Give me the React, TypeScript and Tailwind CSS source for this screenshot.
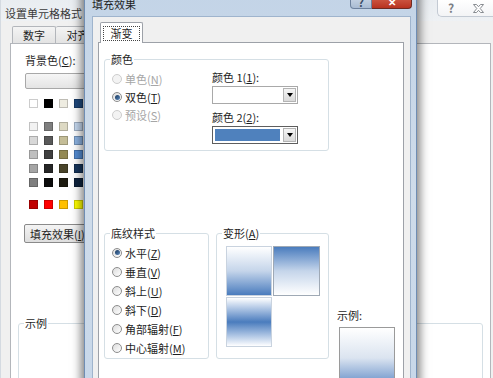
import type { ReactNode } from 'react';

const themeTop = ['#ffffff', '#000000', '#eeece1', '#1f497d'];

const themeShades = [
  ['#f2f2f2', '#7f7f7f', '#ddd9c3', '#c6d9f0'],
  ['#d8d8d8', '#595959', '#c4bd97', '#8db3e2'],
  ['#bfbfbf', '#3f3f3f', '#938953', '#548dd4'],
  ['#a5a5a5', '#262626', '#494429', '#17365d'],
  ['#7f7f7f', '#0c0c0c', '#1d1b10', '#0f243e'],
];

const standard = ['#c00000', '#ff0000', '#ffc000', '#ffff00'];

const shadingStyles = [
  { label: '水平', key: 'Z', checked: true },
  { label: '垂直', key: 'V' },
  { label: '斜上', key: 'U' },
  { label: '斜下', key: 'D' },
  { label: '角部辐射', key: 'F' },
  { label: '中心辐射', key: 'M' },
];

function Swatch({ color }: { color: string }) {
  return (
    <span
      className="h-[9px] w-[9px] border border-black/20"
      style={{ backgroundColor: color }}
    />
  );
}

function Radio({ checked, disabled }: { checked?: boolean; disabled?: boolean }) {
  return (
    <span
      className={`flex h-[10px] w-[10px] shrink-0 items-center justify-center rounded-full border ${
        disabled
          ? 'border-[#cdcdcd] bg-[#f3f3f3]'
          : 'border-[#8d8d8d] bg-linear-to-br from-[#dcdcdc] to-white'
      }`}
    >
      {checked && (
        <span className="h-[5px] w-[5px] rounded-full bg-linear-to-br from-[#17365a] to-[#5d8bc0]" />
      )}
    </span>
  );
}

function RadioRow({
  label,
  accel,
  checked,
  disabled,
  height,
}: {
  label: string;
  accel: string;
  checked?: boolean;
  disabled?: boolean;
  height: string;
}) {
  return (
    <div className={`flex items-center ${height}`}>
      <Radio checked={checked} disabled={disabled} />
      <span className={`ml-[3px] ${disabled ? 'text-[#a6a6a6]' : 'text-[#1e1e1e]'}`}>
        {label}(<span className="underline">{accel}</span>)
      </span>
    </div>
  );
}

function Combo({ filled }: { filled?: boolean }) {
  return (
    <div
      className={`flex h-[18px] w-[86px] border bg-white ${
        filled ? 'border-[#5e5e5e]' : 'border-[#a9a9a9]'
      }`}
    >
      <div className="flex-1 p-[2px]">
        {filled && <div className="h-full bg-[#4f81bd]" />}
      </div>
      <div className="m-px flex w-[13px] items-center justify-center border border-[#b4b4b4] bg-linear-to-b from-[#f5f5f5] to-[#d9d9d9]">
        <span className="h-0 w-0 border-x-[3px] border-t-[4px] border-x-transparent border-t-black" />
      </div>
    </div>
  );
}

function Group({
  title,
  className,
  children,
}: {
  title: ReactNode;
  className?: string;
  children: ReactNode;
}) {
  return (
    <fieldset className={`rounded-[3px] border border-[#d5dfe5] ${className ?? ''}`}>
      <legend className="ml-[5px] px-px leading-[16px] text-[#1e1e1e]">{title}</legend>
      {children}
    </fieldset>
  );
}

function GradientTile({ gradient, border }: { gradient: string; border: string }) {
  return <div className={`h-[50px] border ${border} ${gradient}`} />;
}

export default function App() {
  return (
    <div className="relative h-[378px] w-[493px] overflow-hidden bg-[#f0f0f0] font-['Noto_Sans_CJK_SC','Microsoft_YaHei',sans-serif] text-[11px] leading-[16px] text-[#1e1e1e]">
      {/* 设置单元格格式 (back window) */}
      <div className="flex h-full flex-col border-l border-[#d4dae1]">
        <div className="flex h-[28px] items-start justify-between bg-linear-to-b from-[#e9edf1] to-[#eef1f4]">
          <span className="ml-[4px] mt-[5px] text-[#3a3a3a]">设置单元格格式</span>
          <div className="flex h-[17px] w-[56px] rounded-bl-[5px] border-b border-l border-[#c3cad3] bg-linear-to-b from-white to-[#f3f4f6]">
            <span className="flex w-[26px] items-center justify-center text-[12px] font-bold text-[#7b7f85]">
              ?
            </span>
            <span className="flex flex-1 items-center justify-center">
              <svg width="11" height="9" viewBox="0 0 11 9" aria-hidden="true">
                <path
                  d="M0.5 0.5h3l2 2.2 2-2.2h3l-3.3 4 3.3 4h-3l-2-2.2-2 2.2h-3l3.3-4z"
                  fill="white"
                  stroke="#7b7f85"
                  strokeWidth="0.9"
                />
              </svg>
            </span>
          </div>
        </div>

        <div className="flex flex-1 flex-col pl-[9px] pt-[5px]">
          <div className="flex h-[17px] pl-[2px]">
            <div className="flex w-[44px] items-center justify-center rounded-t-[2px] border border-b-0 border-[#b3b6bb] bg-linear-to-b from-[#f4f4f4] to-[#e3e3e3]">
              数字
            </div>
            <div className="flex w-[44px] items-center justify-center rounded-t-[2px] border border-b-0 border-l-0 border-[#b3b6bb] bg-linear-to-b from-[#f4f4f4] to-[#e3e3e3]">
              对齐
            </div>
          </div>

          <div className="flex w-[481px] flex-1 flex-col border border-[#b3b6bb] bg-white">
            <div className="ml-[14px] mt-[8px]">
              背景色(<span className="underline">C</span>):
            </div>
            <div className="ml-[14px] mt-[5px] h-[16px] w-[150px] rounded-[2px] border border-[#a8a8a8] bg-linear-to-b from-[#f6f6f6] to-[#e4e4e4]" />

            <div className="ml-[18px] mt-[10px] flex gap-[6px]">
              {themeTop.map((c) => (
                <Swatch key={c} color={c} />
              ))}
            </div>

            <div className="ml-[18px] mt-[14px] flex flex-col gap-[5px]">
              {themeShades.map((row, i) => (
                <div key={i} className="flex gap-[6px]">
                  {row.map((c) => (
                    <Swatch key={c} color={c} />
                  ))}
                </div>
              ))}
            </div>

            <div className="ml-[18px] mt-[13px] flex gap-[6px]">
              {standard.map((c) => (
                <Swatch key={c} color={c} />
              ))}
            </div>

            <div className="ml-[13px] mt-[15px] flex h-[19px] w-[90px] items-center rounded-[2px] border border-[#8a8a8a] bg-linear-to-b from-[#f4f4f4] to-[#dedede] pl-[5px]">
              填充效果(<span className="underline">I</span>)...
            </div>

            <Group title="示例" className="ml-[7px] mt-[72px] h-[80px] w-[465px]">
              <div />
            </Group>
          </div>
        </div>
      </div>

      {/* 填充效果 (front window) */}
      <div className="absolute left-[84px] top-[-8px] flex h-[400px] w-[333px] flex-col border border-[#6f8db3] bg-linear-to-b from-[#c3d4e7] via-[#cfdcea] to-[#c7d7e9] shadow-[0_0_9px_3px_rgba(0,0,0,0.5)]">
        <div className="flex h-[24px] items-start justify-between">
          <span className="ml-[7px] mt-[3px] text-[#1e1e1e]">填充效果</span>
          <div className="mr-[4px] flex h-[16px]">
            <div className="flex w-[22px] items-end justify-center rounded-bl-[4px] border border-t-0 border-[#6d829e] bg-linear-to-b from-[#d5e0ec] to-[#a9bcd3] text-[11px] font-bold leading-[12px] text-[#3b4d66]">
              ?
            </div>
            <div className="flex w-[40px] items-end justify-center rounded-br-[4px] border border-l-0 border-t-0 border-[#6e2a22] bg-linear-to-b from-[#e8a493] via-[#c9503c] to-[#b8321f] pb-[1px] text-[10px] font-bold leading-[10px] text-white">
              ✕
            </div>
          </div>
        </div>

        <div className="ml-[7px] mr-[5px] flex flex-1 flex-col border border-[#9fb4cd] bg-[#f0f0f0] pl-[5px] pt-[5px]">
          <div className="relative z-10 -mb-px ml-[2px] flex h-[21px] w-[43px] items-center justify-center rounded-t-[2px] border border-b-0 border-[#9da1a8] bg-white">
            <span className="flex h-[15px] w-[37px] items-center justify-center border border-dotted border-[#444]">
              渐变
            </span>
          </div>

          <div className="flex w-[306px] flex-1 flex-col border border-[#9da1a8] bg-white">
            <Group title="颜色" className="ml-[5px] mt-[8px] w-[225px]">
              <div className="flex pb-[6px]">
                <div className="w-[107px] pl-[7px] pt-[3px]">
                  <RadioRow label="单色" accel="N" disabled height="h-[18px]" />
                  <RadioRow label="双色" accel="T" checked height="h-[18px]" />
                  <RadioRow label="预设" accel="S" disabled height="h-[18px]" />
                </div>
                <div className="flex flex-col pt-[2px]">
                  <span>
                    颜色 1(<span className="underline">1</span>):
                  </span>
                  <div className="mt-px">
                    <Combo />
                  </div>
                  <span className="mt-[5px]">
                    颜色 2(<span className="underline">2</span>):
                  </span>
                  <div className="mt-px">
                    <Combo filled />
                  </div>
                </div>
              </div>
            </Group>

            <div className="ml-[5px] mt-[74px] flex items-start">
              <div className="flex">
                <Group title="底纹样式" className="w-[105px]">
                  <div className="pb-px pl-[7px] pt-[2px]">
                    {shadingStyles.map((s) => (
                      <RadioRow
                        key={s.key}
                        label={s.label}
                        accel={s.key}
                        checked={s.checked}
                        height="h-[19px]"
                      />
                    ))}
                  </div>
                </Group>

                <Group
                  title={
                    <>
                      变形(<span className="underline">A</span>)
                    </>
                  }
                  className="ml-[7px] w-[113px]"
                >
                  <div className="ml-[9px] mt-[5px] grid w-[94px] grid-cols-[46px_47px] gap-px">
                    <GradientTile
                      border="border-[#c9d3df]"
                      gradient="bg-linear-to-b from-white via-[#c5d5ea] to-[#4a7cbd]"
                    />
                    <GradientTile
                      border="border-[#9fa9b5]"
                      gradient="bg-linear-to-b from-[#4a7cbd] via-[#c5d5ea] to-white"
                    />
                    <GradientTile
                      border="border-[#c9d3df]"
                      gradient="bg-linear-to-b from-white via-[#4a7cbd] to-white"
                    />
                  </div>
                </Group>
              </div>

              <div className="ml-[8px] mt-[82px] flex flex-col">
                <span>示例:</span>
                <div className="ml-[2px] mt-[4px] h-[62px] w-[56px] border border-[#9a9a9a] bg-linear-to-b from-white via-[#dbe4f0] to-[#5b86c2]" />
              </div>
            </div>
          </div>
        </div>
      </div>
    </div>
  );
}
